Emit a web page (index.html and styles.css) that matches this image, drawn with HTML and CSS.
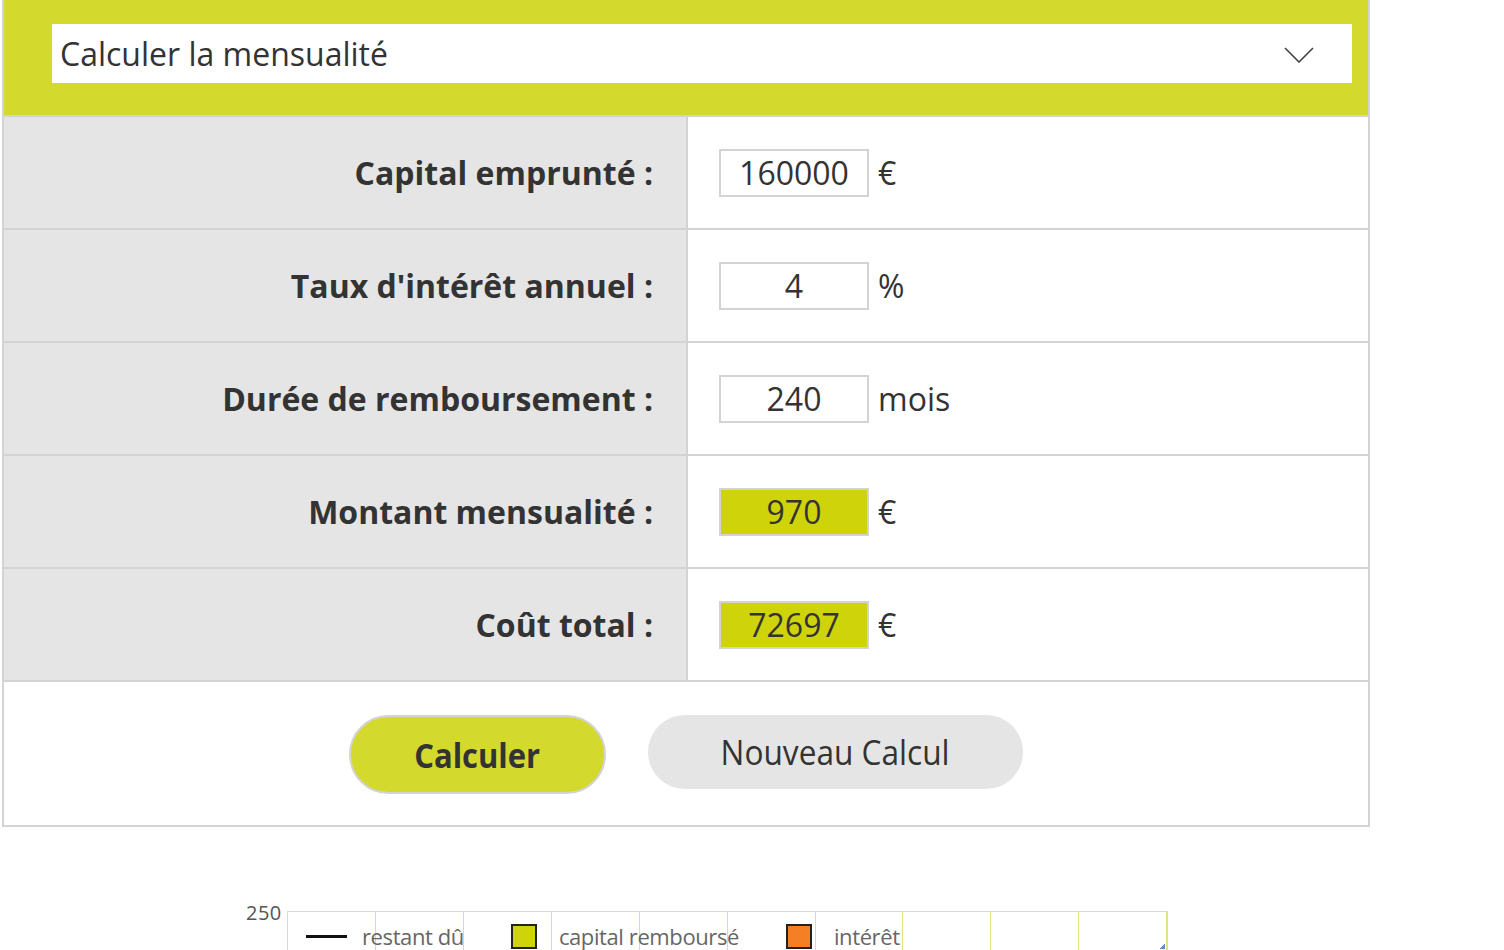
FILE: index.html
```html
<!DOCTYPE html>
<html lang="fr">
<head>
<meta charset="utf-8">
<title>Calculer la mensualité</title>
<link rel="stylesheet" href="styles.css">
</head>
<body>
<div class="calc">
  <div class="calc-head">
    <div class="select">
      <span class="select-text">Calculer la mensualité</span>
      <svg class="chev" width="30" height="16" viewBox="0 0 30 16"><path d="M1 1 L15 15 L29 1" fill="none" stroke="#444" stroke-width="1.6"/></svg>
    </div>
  </div>
  <div class="row">
    <div class="label">Capital emprunté :</div>
    <div class="field"><span class="box">160000</span><span class="unit">€</span></div>
  </div>
  <div class="row">
    <div class="label">Taux d'intérêt annuel :</div>
    <div class="field"><span class="box">4</span><span class="unit">%</span></div>
  </div>
  <div class="row">
    <div class="label">Durée de remboursement :</div>
    <div class="field"><span class="box">240</span><span class="unit">mois</span></div>
  </div>
  <div class="row">
    <div class="label">Montant mensualité :</div>
    <div class="field"><span class="box result">970</span><span class="unit">€</span></div>
  </div>
  <div class="row">
    <div class="label">Coût total :</div>
    <div class="field"><span class="box result">72697</span><span class="unit">€</span></div>
  </div>
  <div class="actions">
    <button class="btn btn-primary"><span>Calculer</span></button>
    <button class="btn btn-secondary"><span>Nouveau Calcul</span></button>
  </div>
</div>

<div class="chart">
  <div class="axis-label">250</div>
  <div class="plot">
    <div class="grid">
      <i></i><i></i><i></i><i></i><i></i><i></i><i></i><i></i><i></i><i></i>
    </div>
    <div class="legend">
      <span class="lg-line"></span><span class="lg-text">restant dû</span>
      <span class="lg-sq yellow"></span><span class="lg-text">capital remboursé</span>
      <span class="lg-sq orange"></span><span class="lg-text">intérêt</span>
    </div>
    <span class="corner"></span>
  </div>
</div>
</body>
</html>
```
FILE: styles.css
```css
* { box-sizing: border-box; }
html, body { margin: 0; padding: 0; background: #fff; }
body {
  font-family: "Open Sans", "Liberation Sans", sans-serif;
  color: #333;
  width: 1504px;
  height: 950px;
  overflow: hidden;
}
.calc {
  margin-left: 2px;
  width: 1368px;
  border: 2px solid #d3d3d3;
  border-top: none;
}
.calc-head {
  background: #d4d92e;
  padding: 24px 16px 32px 48px;
  border-bottom: 2px solid #d3d3d3;
}
.select {
  height: 59px;
  background: #fff;
  display: flex;
  align-items: center;
  justify-content: space-between;
  padding: 0 38px 0 8px;
}
.select-text { font-size: 32px; color: #333; }
.chev { margin-top: 2px; }
.row {
  display: flex;
  height: 113px;
  border-bottom: 2px solid #d3d3d3;
}
.label {
  width: 684px;
  background: #e5e5e5;
  border-right: 2px solid #d3d3d3;
  display: flex;
  align-items: center;
  justify-content: flex-end;
  padding-right: 33px;
  font-weight: 700;
  font-size: 32px;
  color: #333;
}
.field {
  flex: 1;
  display: flex;
  align-items: center;
  padding-left: 31px;
  font-size: 32px;
}
.box {
  width: 150px;
  height: 48px;
  border: 2px solid #d3d3d3;
  display: flex;
  align-items: center;
  justify-content: center;
  color: #333;
}
.box.result { background: #ced30a; }
.unit { margin-left: 9px; }
.actions {
  height: 143px;
  display: flex;
  align-items: flex-start;
  justify-content: center;
  gap: 42px;
  padding-top: 33px;
}
.btn {
  font-family: "Open Sans", "Liberation Sans", sans-serif;
  font-size: 34px;
  color: #333;
  border-radius: 40px;
  cursor: pointer;
  display: flex;
  align-items: center;
  justify-content: center;
  padding: 0;
}
.btn span { display: inline-block; transform: scaleX(0.93); }
.btn-primary {
  width: 257px;
  height: 79px;
  background: #d4d92e;
  border: 2px solid #d3d3d3;
  font-weight: 700;
}
.btn-primary span { transform: scaleX(0.91); }
.btn-secondary {
  width: 375px;
  height: 74px;
  background: #e5e5e5;
  border: none;
  font-weight: 400;
}
.chart {
  margin-top: 84px;
  margin-left: 246px;
  display: flex;
  align-items: flex-start;
}
.axis-label {
  font-size: 20px;
  line-height: 24px;
  color: #555;
  width: 41px;
  margin-top: -10px;
  letter-spacing: 0.5px;
}
.plot {
  position: relative;
  width: 881px;
  height: 60px;
  border: 1px solid #d8d8d8;
  border-bottom: none;
}
.grid {
  position: absolute;
  inset: 0;
  display: flex;
  padding-left: 87px;
  gap: 87px;
}
.grid i { display: block; width: 1px; height: 100%; background: #e0e37a; }
.legend {
  position: relative;
  display: flex;
  align-items: center;
  height: 30px;
  margin-top: 9px;
  padding-left: 18px;
  font-size: 22px;
  line-height: 30px;
  color: #666;
}
.lg-line { width: 41px; height: 3px; background: #111; margin-right: 15px; }
.lg-text { display: inline-block; letter-spacing: -0.4px; }
.lg-sq { width: 26px; height: 25px; border: 2px solid #222; margin-left: 47px; margin-right: 22px; }
.lg-sq.yellow { background: #ced30a; }
.lg-sq.orange { background: #f57f24; }
.corner {
  position: absolute;
  right: 2px;
  top: 32px;
  width: 5px;
  height: 5px;
  background: linear-gradient(135deg, transparent 50%, #5b8fd0 50%);
}
```
